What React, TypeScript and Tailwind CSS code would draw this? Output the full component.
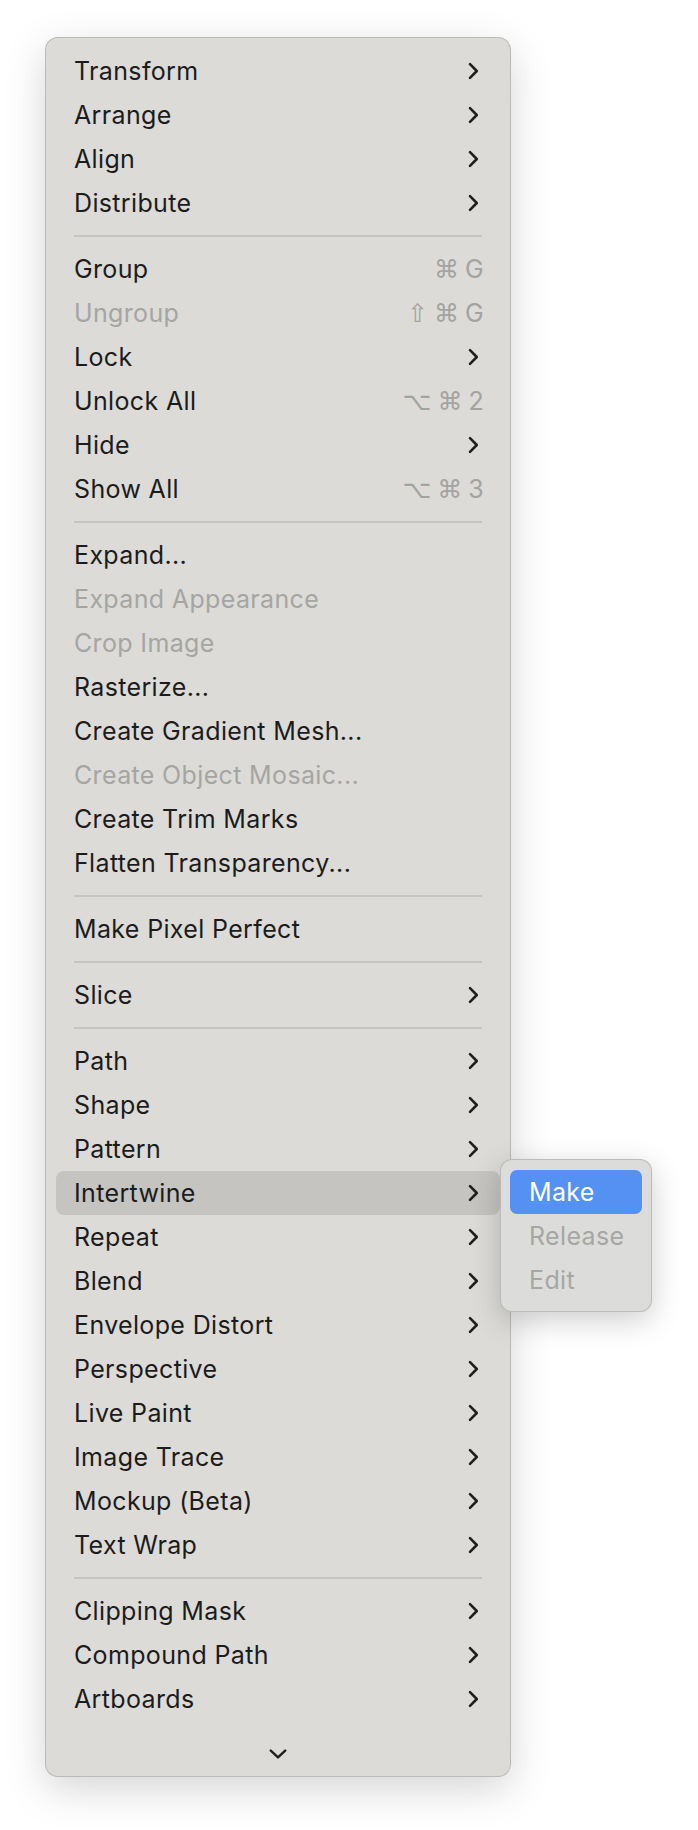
import React from 'react';

type Item =
  | { kind: 'sep' }
  | { kind: 'item'; label: string; sub?: boolean; keys?: string[]; disabled?: boolean; active?: boolean };

const sep: Item = { kind: 'sep' };
const sub = (label: string): Item => ({ kind: 'item', label, sub: true });
const plain = (label: string, disabled = false): Item => ({ kind: 'item', label, disabled });
const keyed = (label: string, keys: string[], disabled = false): Item => ({ kind: 'item', label, keys, disabled });

const items: Item[] = [
  sub('Transform'),
  sub('Arrange'),
  sub('Align'),
  sub('Distribute'),
  sep,
  keyed('Group', ['⌘', 'G']),
  keyed('Ungroup', ['⇧', '⌘', 'G'], true),
  sub('Lock'),
  keyed('Unlock All', ['⌥', '⌘', '2']),
  sub('Hide'),
  keyed('Show All', ['⌥', '⌘', '3']),
  sep,
  plain('Expand...'),
  plain('Expand Appearance', true),
  plain('Crop Image', true),
  plain('Rasterize...'),
  plain('Create Gradient Mesh...'),
  plain('Create Object Mosaic...', true),
  plain('Create Trim Marks'),
  plain('Flatten Transparency...'),
  sep,
  plain('Make Pixel Perfect'),
  sep,
  sub('Slice'),
  sep,
  sub('Path'),
  sub('Shape'),
  sub('Pattern'),
  { kind: 'item', label: 'Intertwine', sub: true, active: true },
  sub('Repeat'),
  sub('Blend'),
  sub('Envelope Distort'),
  sub('Perspective'),
  sub('Live Paint'),
  sub('Image Trace'),
  sub('Mockup (Beta)'),
  sub('Text Wrap'),
  sep,
  sub('Clipping Mask'),
  sub('Compound Path'),
  sub('Artboards'),
];

const Chevron = () => (
  <svg width="11" height="18" viewBox="0 0 11 18" fill="none" stroke="#1f1f1f" strokeWidth="2.6" strokeLinecap="round" strokeLinejoin="round">
    <path d="M2 2.2 L8.8 9 L2 15.8" />
  </svg>
);

const SubMenu = () => (
  <div className="absolute left-full top-[-12px] z-10 w-[152px] rounded-[12px] border border-black/15 bg-[#dcdddb] px-[9px] pt-[10px] pb-[9px] shadow-[0_8px_30px_rgba(0,0,0,0.2)]">
    <div className="flex h-[44px] items-center rounded-[7px] bg-[#5591f2] pl-[19px] pt-[2px] text-white">Make</div>
    <div className="flex h-[44px] items-center pl-[19px] pt-[2px] text-[#a6a7a5]">Release</div>
    <div className="flex h-[44px] items-center pl-[19px] pt-[2px] text-[#a6a7a5]">Edit</div>
  </div>
);

export default function App() {
  return (
    <div className="min-h-[1830px] bg-white pl-[45px] pt-[37px] font-['Inter','DejaVu_Sans',sans-serif] text-[25px] tracking-[0.35px] text-[#1c1c1c]">
      <div className="relative w-[466px] rounded-[13px] border border-black/15 bg-[#dcdbd8] px-[10px] pt-[11px] shadow-[0_12px_40px_rgba(0,0,0,0.17)]">
        {items.map((it, i) =>
          it.kind === 'sep' ? (
            <div key={i} className="flex h-[22px] items-center px-[18px]">
              <div className="h-[2px] w-full bg-[#c6c5c2]" />
            </div>
          ) : (
            <div
              key={i}
              className={`relative flex h-[44px] items-center justify-between rounded-[8px] pl-[18px] pr-[21px] ${it.active ? 'bg-[#c5c4c0]' : ''}`}
            >
              <span className={`pt-[2px] ${it.disabled ? 'text-[#a5a5a3]' : ''}`}>{it.label}</span>
              {it.sub && <Chevron />}
              {it.keys && (
                <span className="-mr-[5px] flex items-center gap-[6px] pt-[2px] text-[#a3a3a1]">
                  {it.keys.map((k, j) => (
                    <span key={j} className={/^[A-Z0-9]$/.test(k) ? '' : "font-['DejaVu_Sans'] text-[25px] tracking-normal"}>
                      {k}
                    </span>
                  ))}
                </span>
              )}
              {it.active && <SubMenu />}
            </div>
          )
        )}
        <div className="flex h-[55px] justify-center pt-[28px]">
          <svg width="18" height="10" viewBox="0 0 18 10" fill="none" stroke="#1f1f1f" strokeWidth="2.4" strokeLinecap="round" strokeLinejoin="round">
            <path d="M1.8 1.6 L9 8.4 L16.2 1.6" />
          </svg>
        </div>
      </div>
    </div>
  );
}
